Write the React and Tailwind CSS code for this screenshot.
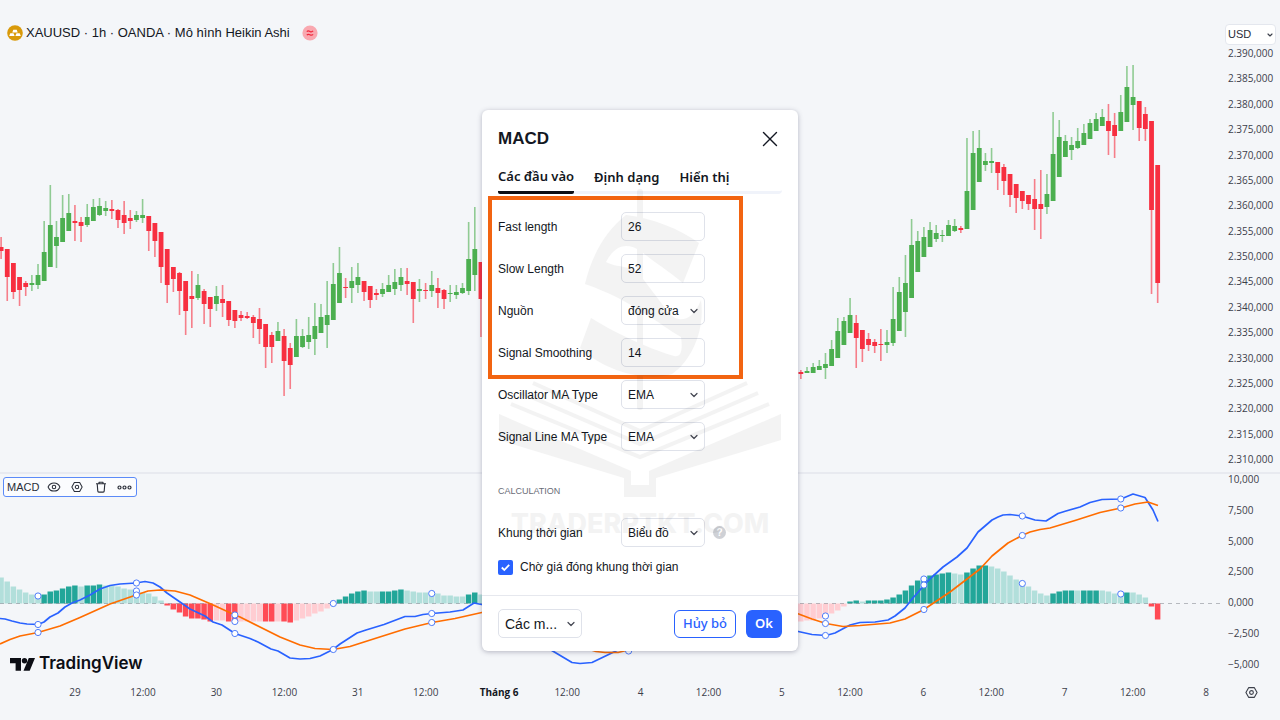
import React from 'react';
import { ChevronDown, Eye, X } from 'lucide-react';

const STEP = 6.152;
const ORIGIN = 1.1;
const ZERO = 603.5;

const barX = (i) => ORIGIN + i * STEP;

// each candle: direction, high, body top, body bottom, low
const CANDLES_LEFT = [
    ['d', 237, 247, 251, 259], ['d', 249, 249, 277, 301], ['d', 263, 263, 292, 299], ['d', 277, 277, 290, 306],
    ['d', 281, 283, 287, 296], ['u', 275, 283, 285, 291], ['u', 264, 275, 285, 289], ['u', 221, 252, 281, 281],
    ['u', 185, 225, 267, 267], ['u', 221, 237, 246, 268], ['u', 195, 218, 242, 242], ['u', 194, 213, 231, 231],
    ['d', 205, 221, 223, 241], ['d', 217, 222, 226, 242], ['u', 204, 217, 225, 227], ['u', 199, 207, 221, 221],
    ['u', 198, 206, 215, 216], ['u', 201, 208, 211, 216], ['d', 200, 209, 211, 219], ['d', 209, 210, 220, 228],
    ['d', 201, 215, 223, 234], ['d', 210, 218, 221, 229], ['u', 211, 215, 220, 222], ['u', 199, 215, 218, 223],
    ['d', 216, 216, 231, 251], ['d', 223, 223, 241, 257], ['d', 232, 232, 267, 283], ['d', 249, 249, 285, 303],
    ['d', 267, 267, 279, 292], ['d', 272, 273, 291, 315], ['d', 281, 281, 311, 335], ['d', 271, 296, 299, 328],
    ['u', 274, 285, 298, 300], ['d', 289, 291, 304, 324], ['d', 297, 297, 309, 327], ['u', 286, 296, 304, 311],
    ['d', 285, 299, 303, 317], ['d', 301, 301, 320, 326], ['d', 310, 310, 321, 328], ['d', 311, 315, 318, 321],
    ['d', 312, 316, 318, 319], ['d', 315, 317, 323, 338], ['d', 308, 319, 329, 344], ['d', 324, 324, 347, 368],
    ['d', 332, 335, 347, 363], ['u', 322, 331, 341, 341], ['d', 329, 336, 361, 396], ['d', 343, 348, 365, 389],
    ['u', 319, 336, 357, 357], ['u', 329, 336, 347, 348], ['u', 317, 335, 342, 349], ['u', 303, 326, 339, 355],
    ['u', 304, 317, 333, 333], ['u', 281, 315, 325, 348], ['u', 263, 284, 320, 320], ['u', 247, 273, 303, 303],
    ['d', 278, 287, 288, 298], ['u', 267, 281, 288, 303], ['u', 263, 277, 285, 293], ['d', 281, 281, 292, 301],
    ['d', 286, 286, 300, 308], ['d', 289, 293, 295, 300], ['u', 283, 289, 294, 297], ['u', 275, 285, 292, 292],
    ['u', 269, 282, 289, 295], ['u', 268, 277, 285, 291], ['d', 268, 281, 284, 295], ['d', 282, 282, 299, 323],
    ['u', 279, 289, 291, 302], ['d', 283, 290, 291, 299], ['u', 271, 285, 291, 297], ['d', 278, 288, 293, 308],
    ['d', 289, 290, 299, 309], ['u', 285, 293, 294, 302], ['u', 285, 292, 295, 299], ['u', 283, 288, 293, 294],
    ['u', 222, 259, 291, 295], ['u', 207, 249, 275, 291], ['d', 262, 262, 299, 337],
];

const CANDLES_RIGHT = [
    ['d', 370, 372, 374, 379], ['u', 367, 371, 373, 373], ['u', 363, 367, 373, 373], ['u', 360, 366, 370, 370],
    ['u', 353, 364, 368, 379], ['u', 340, 349, 366, 366], ['u', 318, 331, 358, 358], ['u', 317, 321, 345, 345],
    ['u', 298, 315, 333, 333], ['d', 315, 323, 338, 368], ['d', 330, 330, 349, 362], ['d', 333, 339, 345, 351],
    ['d', 339, 342, 346, 353], ['d', 329, 344, 345, 361], ['u', 330, 342, 345, 353], ['u', 287, 319, 343, 346],
    ['u', 277, 292, 331, 331], ['u', 255, 283, 312, 337], ['u', 219, 245, 298, 298], ['u', 231, 241, 272, 272],
    ['u', 227, 237, 257, 257], ['u', 222, 230, 247, 247], ['u', 225, 233, 239, 242], ['u', 230, 235, 236, 242],
    ['u', 220, 225, 236, 236], ['u', 219, 226, 231, 232], ['d', 226, 228, 230, 233], ['u', 138, 191, 229, 229],
    ['u', 131, 153, 210, 210], ['u', 130, 148, 182, 182], ['u', 153, 161, 165, 171], ['u', 148, 161, 163, 173],
    ['d', 162, 162, 173, 190], ['d', 164, 167, 181, 195], ['d', 174, 174, 195, 207], ['d', 184, 184, 198, 213],
    ['d', 191, 191, 201, 209], ['d', 195, 195, 204, 210], ['d', 179, 199, 209, 230], ['d', 170, 204, 209, 239],
    ['u', 174, 194, 207, 214], ['u', 112, 154, 201, 201], ['u', 120, 137, 177, 177], ['u', 135, 141, 157, 157],
    ['u', 137, 145, 150, 160], ['u', 128, 141, 148, 149], ['u', 124, 133, 145, 145], ['u', 119, 123, 139, 139],
    ['u', 113, 119, 131, 131], ['u', 109, 117, 126, 126], ['d', 104, 121, 131, 155], ['d', 113, 125, 136, 158],
    ['u', 95, 112, 131, 131], ['u', 66, 87, 122, 122], ['u', 65, 97, 105, 130], ['d', 101, 101, 128, 141],
    ['d', 107, 114, 129, 141], ['d', 121, 121, 210, 294], ['d', 165, 165, 283, 303],
];

// histogram runs: first bar, strong (1) or faded (0), heights
const HISTOGRAM = [
    [0, 0, [26, 22, 17, 14, 11, 9, 8]],
    [7, 1, [9, 12, 13, 15, 17, 18]],
    [13, 0, [17]],
    [14, 1, [18, 18, 19]],
    [17, 0, [18, 18, 17, 15, 14, 13, 11, 10, 7, 3]],
    [27, 1, [-2, -6, -9, -13, -15, -15, -16, -18]],
    [35, 0, [-17, -17]],
    [37, 1, [-18, -18]],
    [39, 0, [-18, -18, -18, -18]],
    [43, 1, [-18, -18]],
    [45, 0, [-18]],
    [46, 1, [-18, -19]],
    [48, 0, [-17, -15, -13, -10, -8, -5]],
    [55, 1, [4, 7, 10, 12, 13]],
    [60, 0, [12, 12]],
    [62, 1, [12, 12, 13, 14]],
    [66, 0, [13, 12, 11, 11, 10, 10, 8, 8, 7, 7]],
    [76, 1, [9, 11]],
    [78, 0, [9]],
    [130, 0, [-18, -17, -17, -15, -13, -10, -7, -3]],
    [138, 1, [2, 3]],
    [140, 0, [2]],
    [141, 1, [3, 3, 3, 4, 6, 9, 13, 18, 23, 25, 28, 29, 30, 31]],
    [155, 0, [30, 29]],
    [157, 1, [31, 35, 38, 38]],
    [161, 0, [37, 35, 32, 28, 24, 21, 17, 13, 10, 8]],
    [171, 1, [10, 12, 13, 13]],
    [175, 0, [13]],
    [176, 1, [13, 13, 13]],
    [179, 0, [13, 12, 10, 10]],
    [183, 1, [11]],
    [184, 0, [11, 9, 6]],
    [187, 1, [-3, -16]],
];

const MACD_LINE = [
    '0,618.5 5,619 12,621 20,623 27,624 38,624.5 44,622 50,617 58,613 65,607 72,603 80,600 90,595 100,589 110,585.5 120,584 136,583 145,581.5 153,583 160,587 167,593 180,602 190,609 205,616 213,622 222,625 235,633.5 250,638.5 258,642 271,649 278,651 290,658 300,659 310,658.5 320,656 333,649.5 340,644 357,633 366,630 384,624.5 405,616.5 415,616.5 423,614.5 432,613.5 450,612 463,610 474,603 484,605',
    '545,646 551,650 572,662.5 580,663.5 592,662.5 618,650 628,642',
    '796,631 812,634.5 826,635.5 835,633 850,625 860,622.5 875,622 888,620 895,616 905,608 912,599 920,590 924,585 932,577 943,567 957,557 967,548 978,532 985,526 992,520 998,517 1003,515 1010,514.5 1022,516 1035,520 1046,521 1058,513.5 1066,511 1080,507 1090,502.5 1102,499.5 1121,499 1133,494 1145,497.5 1153,510 1158,521.5',
];

const SIGNAL_LINE = [
    '0,644 10,639.5 20,636 38,632.5 60,626 80,617.5 110,604 136,595 148,591 160,590 175,591 190,595 212,604.5 235,615 240,617 260,627 280,637 300,645 315,648.5 333,649.5 350,646.5 375,638.5 405,629 432,622.5 455,618.5 484,612',
    '588,649 596,651.5 605,652.5 618,652.5 628,650',
    '796,613 812,619 826,623.5 843,626.5 860,625.5 890,623 905,619 924,609.5 935,602 950,592 967,579 980,569 992,556 1008,543 1022,535.5 1030,532 1040,529.5 1050,528 1075,520.5 1100,512.5 1121,508 1135,504 1148,502 1158,505.5',
];

const HANDLES = [
    [6, 596], [6, 624.5], [6, 632.5],
    [22, 583], [22, 591], [22, 595],
    [38, 615], [38, 621.5], [38, 633.5],
    [54, 603.5], [54, 649.5],
    [70, 593.5], [70, 613.5], [70, 622.5],
    [102, 651],
    [134, 616], [134, 623.5], [134, 635.5],
    [150, 579], [150, 585], [150, 609.5],
    [166, 516], [166, 535.5], [166, 583.5],
    [182, 499], [182, 508], [182, 594],
];

const PRICES = [
    '2.390,000', '2.385,000', '2.380,000', '2.375,000', '2.370,000', '2.365,000', '2.360,000', '2.355,000', '2.350,000',
    '2.345,000', '2.340,000', '2.335,000', '2.330,000', '2.325,000', '2.320,000', '2.315,000', '2.310,000',
];

const LEVELS = ['10,000', '7,500', '5,000', '2,500', '0,000', '−2,500', '−5,000'];

const DAYS = ['29', '30', '31', 'Tháng 6', '4', '5', '6', '7'];

const Candles = ({ data, start }) =>
    data.map(([dir, high, top, bottom, low], n) => {
        const x = barX(start + n);
        const fill = dir === 'u' ? '#4caf50' : '#f72f40';
        return (
            <g key={start + n} fill={fill}>
                <rect x={x - 0.8} y={high} width="1.6" height={low - high} opacity="0.6" />
                <rect x={x - 2.4} y={top} width="4.8" height={bottom - top} />
            </g>
        );
    });

const PricePane = () => (
    <svg className="block w-full h-auto" viewBox="0 45 1222 427">
        <Candles data={CANDLES_LEFT} start={0} />
        <Candles data={CANDLES_RIGHT} start={130} />
    </svg>
);

const barFill = (height, strong) => {
    if (height > 0) return strong ? '#22a699' : '#b2dfdb';
    return strong ? '#ff4b55' : '#ffcdd2';
};

const MacdPane = () => (
    <svg className="block w-full h-auto" viewBox="0 474 1222 206">
        {HISTOGRAM.map(([start, strong, heights]) =>
            heights.map((h, n) => (
                <rect
                    key={start + n}
                    x={barX(start + n) - 2.8}
                    y={h > 0 ? ZERO - h : ZERO}
                    width="5.5"
                    height={Math.abs(h)}
                    fill={barFill(h, strong)}
                />
            ))
        )}
        <path d={`M0 ${ZERO}H1222`} stroke="#787b86" strokeOpacity="0.5" strokeDasharray="4 4" />
        <g fill="none" strokeWidth="1.7" strokeLinejoin="round">
            {MACD_LINE.map((p) => <polyline key={p} points={p} stroke="#2962ff" />)}
            {SIGNAL_LINE.map((p) => <polyline key={p} points={p} stroke="#ff6d00" />)}
        </g>
        {HANDLES.map(([i, y]) => (
            <circle key={`${i}-${y}`} cx={barX(i)} cy={y} r="3.1" fill="#fff" stroke="#4f7dfa" strokeWidth="1" />
        ))}
    </svg>
);

const HexNut = ({ className }) => (
    <svg className={className} viewBox="0 0 14 14" fill="none" stroke="currentColor" strokeWidth="1.2">
        <path d="M3.9 1.8h6.2L13 7l-2.9 5.2H3.9L1 7z" strokeLinejoin="round" />
        <circle cx="7" cy="7" r="2" />
    </svg>
);

const TrashIcon = ({ className }) => (
    <svg className={className} viewBox="0 0 12 12" fill="none" stroke="currentColor" strokeWidth="1.1">
        <path d="M1 2.8h10M4 2.8V1.2h4v1.6M2.2 2.8l.6 7.3c0 .6.4 1 1 1h4.4c.6 0 1-.4 1-1l.6-7.3" strokeLinejoin="round" />
    </svg>
);

const GoldIcon = () => (
    <svg className="size-4" viewBox="0 0 16 16">
        <circle cx="8" cy="8" r="7.8" fill="#d99a0b" />
        <path d="M6.3 4.8h3.4l1 2.6H5.3zM3.3 8.3h3.2l1.1 2.7H2.2zM9.5 8.3h3.2l1.1 2.7H8.4z" fill="#fff" />
    </svg>
);

const HeikinBadge = () => (
    <svg className="size-4" viewBox="0 0 16 16">
        <circle cx="8" cy="8" r="7.6" fill="#f9a8b0" />
        <path
            d="M4.8 6.7c1-1.1 1.9-1 3.1-.3 1.2.7 2.2.6 3.2-.5M4.8 10.1c1-1.1 1.9-1 3.1-.3 1.2.7 2.2.6 3.2-.5"
            fill="none"
            stroke="#f0283c"
            strokeWidth="1.2"
        />
    </svg>
);

const Header = () => (
    <header className="flex h-[45px] items-end pl-[7px] pb-1 text-[#131722]">
        <div className="flex h-4 items-center">
            <GoldIcon />
            <h1 className="ml-[3px] text-[13px]">XAUUSD · 1h · OANDA · Mô hình Heikin Ashi</h1>
            <span className="ml-3">
                <HeikinBadge />
            </span>
        </div>
    </header>
);

const Legend = () => (
    <div className="absolute left-[3px] top-[3px] flex h-5 items-center rounded-[3px] border border-[#5b8af8] bg-[#fbfcfe] px-[3px] text-[#2a2e39]">
        <span className="w-10 text-[11px]">MACD</span>
        <button aria-label="Ẩn" className="flex w-6 items-center"><Eye className="size-[14px]" strokeWidth={1.8} /></button>
        <button aria-label="Cài đặt" className="flex w-6 items-center"><HexNut className="size-3" /></button>
        <button aria-label="Xóa" className="flex w-[22px] items-center"><TrashIcon className="size-3" /></button>
        <button aria-label="Thêm" className="flex w-4 items-center">
            <svg className="h-[5px] w-[15px]" viewBox="0 0 15 5" fill="none" stroke="currentColor" strokeWidth="1.2">
                <circle cx="2.5" cy="2.5" r="1.5" />
                <circle cx="7.5" cy="2.5" r="1.5" />
                <circle cx="12.5" cy="2.5" r="1.5" />
            </svg>
        </button>
    </div>
);

const Brand = () => (
    <a href="#" className="absolute bottom-[5px] left-[10px] flex h-[22px] items-center gap-1 text-[#0c0e15]">
        <svg className="h-[13px] w-[25px]" viewBox="0 0 25 13" fill="currentColor">
            <path d="M0 0h11v12.8H5.6V5.2H0z" />
            <circle cx="14.5" cy="2.7" r="2.7" />
            <path d="M18.8 0H25l-5.3 12.8h-6.2z" />
        </svg>
        <span className="font-[Inter] text-[17px] font-semibold">TradingView</span>
    </a>
);

const PriceAxis = () => (
    <aside className="flex w-[58px] flex-none flex-col pt-6 pb-[6px] text-[#3c404b]">
        <div className="relative ml-[3px] mr-1">
            <select aria-label="Tiền tệ" className="block h-[21px] w-full appearance-none rounded border border-[#e4e7ee] bg-white pl-[2px] text-[11px] text-[#2a2e39]">
                <option>USD</option>
            </select>
            <ChevronDown className="pointer-events-none absolute right-[2px] top-[7px] size-2" strokeWidth={3.5} />
        </div>
        <ul className="mt-px flex flex-1 flex-col justify-between pl-[6px] font-['Open_Sans'] text-[10px] leading-[14px]">
            {PRICES.map((p) => <li key={p}>{p}</li>)}
        </ul>
    </aside>
);

const LevelAxis = () => (
    <ul className="flex w-[58px] flex-none flex-col justify-between pb-[11px] pl-[6px] font-['Open_Sans'] text-[10px] leading-[10px] text-[#3c404b]">
        {LEVELS.map((l) => <li key={l}>{l}</li>)}
    </ul>
);

const TimeAxis = () => (
    <footer className="flex items-center pt-[5px] pl-[51px] font-['Open_Sans'] text-[10px] leading-[14px] text-[#3c404b]">
        {DAYS.map((d) => (
            <div key={d} className="flex flex-1">
                <span className={d.length > 2 ? 'w-12 whitespace-nowrap text-center font-bold text-[#131722]' : 'w-12 text-center'}>{d}</span>
                <span className="ml-5 w-12 text-center">12:00</span>
            </div>
        ))}
        <span className="w-12 text-center">8</span>
        <button aria-label="Cài đặt trục" className="flex w-[50px] items-center justify-center pr-2">
            <HexNut className="size-[13px]" />
        </button>
    </footer>
);

const Dropdown = ({ id, label, value, big }) => (
    <div className="relative w-[84px]">
        <select
            id={id}
            aria-label={label}
            className={`block h-[29px] w-full appearance-none rounded-[5px] border border-[#dfe2ea] bg-white pl-[6px] ${big ? 'text-sm' : 'text-xs'}`}
        >
            <option>{value}</option>
        </select>
        <ChevronDown className="pointer-events-none absolute right-[5px] top-[9px] size-3 text-[#434651]" strokeWidth={2.4} />
    </div>
);

const Row = ({ id, label, value, select, children }) => (
    <div className="flex items-center">
        <label htmlFor={id} className="w-[123px] whitespace-nowrap text-xs">{label}</label>
        {select ? (
            <Dropdown id={id} value={value} />
        ) : (
            <input id={id} defaultValue={value} className="h-[29px] w-[84px] rounded-[5px] border border-[#dfe2ea] bg-white pl-[6px] text-xs" />
        )}
        {children}
    </div>
);

const Watermark = () => (
    <div className="pointer-events-none absolute inset-x-0 top-[79px] flex flex-col items-center opacity-[0.045]">
        <svg className="w-full" viewBox="482 189 316 310" fill="#000">
            <rect x="637" y="189" width="6" height="221" rx="3" />
            <path d="M626 215C652 218 680 229 699 243L683 283C666 269 651 260 641 251C628 243 616 243 606 262C616 268 632 265 640 275L668 312C676 322 691 325 701 300C705 330 692 360 672 374C650 381 610 375 580 348L591 318C620 336 653 350 674 356C681 358 683 350 681 337C660 325 632 300 585 284C592 255 605 232 626 215z" />
            <path d="M499 414L631 471v14h18v-14l132-57v26l-125 38v19h-32v-19l-125-38z" />
            <g fill="none" stroke="#000" strokeWidth="4">
                <path d="M533 383L640 431L747 383" />
                <path d="M522 393L640 444L758 393" />
                <path d="M511 404L640 457L769 404" />
            </g>
        </svg>
        <span className="mt-[9px] font-[Inter] text-[27px] leading-8 font-extrabold text-black">TRADERPTKT.COM</span>
    </div>
);

const SettingsDialog = () => (
    <section role="dialog" aria-label="MACD" className="relative w-[316px] rounded-md bg-white text-[#131722] shadow-[0_1px_5px_rgba(60,60,90,0.35)]">
        <div className="flex h-14 items-center justify-between pl-4 pr-[15px] pt-px">
            <h2 className="text-[17px] font-bold">MACD</h2>
            <button aria-label="Đóng"><X className="size-[26px]" strokeWidth={1.3} /></button>
        </div>
        <div role="tablist" className="mx-4 flex h-7 gap-5 rounded-sm border-b-3 border-[#f0f3fa] font-['Noto_Sans'] text-[13px] font-semibold whitespace-nowrap">
            <button role="tab" aria-selected="true" className="-mb-[3px] rounded-b-[2px] border-b-3 border-[#0c0e15] pb-[3px]">Các đầu vào</button>
            <button role="tab" className="pb-px">Định dạng</button>
            <button role="tab" className="pb-px">Hiển thị</button>
        </div>
        <div className="px-4 pt-[18px]">
            <div className="relative flex flex-col gap-[13px]">
                <Row id="fast" label="Fast length" value="26" />
                <Row id="slow" label="Slow Length" value="52" />
                <Row id="source" label="Nguồn" value="đóng cửa" select />
                <Row id="smoothing" label="Signal Smoothing" value="14" />
                <div className="pointer-events-none absolute -top-4 -right-0 -bottom-3 -left-[10px] mr-[39px] border-4 border-[#f26411]" />
            </div>
            <div className="mt-[13px] flex flex-col gap-[13px]">
                <Row id="osc" label="Oscillator MA Type" value="EMA" select />
                <Row id="sig" label="Signal Line MA Type" value="EMA" select />
            </div>
            <h3 className="mt-[33px] mb-5 text-[9px] leading-[14px] text-[#6a6d78]">CALCULATION</h3>
            <Row id="timeframe" label="Khung thời gian" value="Biểu đồ" select>
                <span className="ml-2 flex size-[13px] items-center justify-center rounded-full bg-[#cfd1d6] text-[10px] font-bold text-white">?</span>
            </Row>
            <label className="mt-[11px] flex h-[18px] items-center gap-[7px] text-xs">
                <span className="grid size-[15px] place-items-center">
                    <input type="checkbox" defaultChecked className="col-start-1 row-start-1 size-[15px] appearance-none rounded-[2px] bg-[#2962ff]" />
                    <svg className="pointer-events-none col-start-1 row-start-1 size-[9px]" viewBox="0 0 9 9" fill="none" stroke="#fff" strokeWidth="1.8">
                        <path d="M.8 4.5l2.5 2.5L8.2 1.8" />
                    </svg>
                </span>
                Chờ giá đóng khung thời gian
            </label>
        </div>
        <div className="mt-[19px] flex items-center border-t border-[#e6e8ee] px-4 pt-[13px] pb-[13px]">
            <Dropdown label="Mặc định" value="Các m..." big />
            <button className="ml-auto h-7 w-[62px] rounded-md border border-[#2962ff] font-['Noto_Sans'] text-[13px] font-medium text-[#2962ff]">Hủy bỏ</button>
            <button className="ml-[10px] h-7 w-9 rounded-md bg-[#2962ff] font-['Noto_Sans'] text-[13px] font-semibold text-white">Ok</button>
        </div>
        <Watermark />
    </section>
);

export default function App() {
    return (
        <div className="relative min-h-screen bg-[#f4f6f9] font-['Liberation_Sans',sans-serif]">
            <div className="flex border-b-2 border-[#e8eaf0]">
                <main className="min-w-0 flex-1">
                    <Header />
                    <PricePane />
                </main>
                <PriceAxis />
            </div>
            <div className="flex">
                <div className="relative min-w-0 flex-1">
                    <MacdPane />
                    <Legend />
                    <Brand />
                </div>
                <LevelAxis />
            </div>
            <TimeAxis />
            <div className="absolute inset-x-0 top-[110px] flex justify-center">
                <SettingsDialog />
            </div>
        </div>
    );
}
